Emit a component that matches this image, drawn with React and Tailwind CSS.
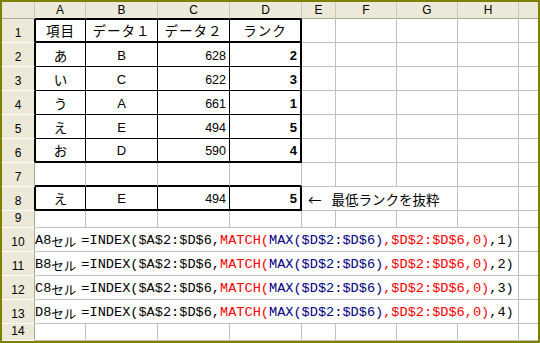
import React from "react";

const sans = "font-['Liberation_Sans','Noto_Sans_CJK_JP',sans-serif]";
const cjk = "font-['Noto_Sans_CJK_JP',sans-serif]";
const mono = "font-['Liberation_Mono','Noto_Sans_CJK_JP',monospace]";

const cols = ["A", "B", "C", "D", "E", "F", "G", "H", ""];

const data = [
  ["あ", "B", "628", "2"],
  ["い", "C", "622", "3"],
  ["う", "A", "661", "1"],
  ["え", "E", "494", "5"],
  ["お", "D", "590", "4"],
];

// normal empty cell with excel gridlines
function Empty({ last }) {
  return (
    <div
      className={
        last
          ? "border-b border-[#c0c0c0]"
          : "border-r border-b border-[#c0c0c0]"
      }
    />
  );
}

function RowHead({ n, thick }) {
  return (
    <div
      className={`flex items-end justify-center pb-[3px] bg-[#ece9d8] border-b border-b-white text-[12px] leading-none ${
        thick ? "border-r border-r-black" : "border-r border-r-[#aca899]"
      }`}
    >
      {n}
    </div>
  );
}

// border classes for the boxed table (A1:D6 and A8:D8)
function boxBorder(row, col) {
  let b = "";
  if (row === 1) b += " border-t border-t-black";
  if (row === 1 || row === 6 || row === 8) b += " border-b-2 border-b-black";
  else b += " border-b border-b-black";
  if (col === 0) b += " border-l border-l-black border-r border-r-black";
  else if (col === 3) b += " border-r-2 border-r-black";
  else b += " border-r border-r-black";
  return b;
}

function HeadRow() {
  return (
    <>
      {["項目", "データ１", "データ２", "ランク"].map((t, i) => (
        <div
          key={t}
          className={`flex items-end justify-center pb-[4px] text-[13.5px] tracking-[1px] leading-none ${cjk} ${boxBorder(1, i)}`}
        >
          {t}
        </div>
      ))}
    </>
  );
}

function TableRow({ row, cells }) {
  return (
    <>
      <div
        className={`flex items-end justify-center pb-[4px] text-[13.5px] leading-none ${cjk} ${boxBorder(row, 0)}`}
      >
        {cells[0]}
      </div>
      <div
        className={`flex items-end justify-center pb-[4px] text-[13px] leading-none ${boxBorder(row, 1)}`}
      >
        {cells[1]}
      </div>
      <div
        className={`flex items-end justify-end pr-[3px] pb-[4px] text-[12.5px] leading-none ${boxBorder(row, 2)}`}
      >
        {cells[2]}
      </div>
      <div
        className={`flex items-end justify-end pr-[3px] pb-[4px] text-[13px] font-bold leading-none ${boxBorder(row, 3)}`}
      >
        {cells[3]}
      </div>
    </>
  );
}

function Formula({ cell, n }) {
  return (
    <div
      className={`col-span-8 flex items-end pb-[3px] whitespace-nowrap border-r border-b border-[#c0c0c0] ${mono} text-[13.6px] leading-none`}
    >
      <span>{cell}8</span>
      <span className={`inline-block w-[30px] ${cjk} text-[12.5px]`}>セル</span>
      <span>=INDEX($A$2:$D$6,</span>
      <span className="text-[#ff0000]">MATCH(</span>
      <span className="text-[#000080]">MAX($D$2:$D$6)</span>
      <span className="text-[#ff0000]">,$D$2:$D$6,0)</span>
      <span>,{n})</span>
    </div>
  );
}

export default function App() {
  return (
    <div
      className={`w-[540px] h-[343px] bg-white border-2 border-[#808000] grid grid-cols-[33px_51px_72px_72px_72px_34px_61px_61px_61px_1fr] grid-rows-[17px_repeat(8,24px)_17px_repeat(4,24px)_17px] text-black ${sans}`}
    >
      {/* column header */}
      <div className="bg-[#ece9d8] border-r border-b border-r-[#cbc7b8] border-b-[#aca899]" />
      {cols.map((c, i) => (
        <div
          key={i}
          className={`flex items-end justify-center pb-[2px] bg-[#ece9d8] text-[12px] leading-none ${
            i < 4 ? "border-b border-b-black" : "border-b border-b-[#aca899]"
          } ${i < 8 ? "border-r border-r-[#cbc7b8]" : ""}`}
        >
          {c}
        </div>
      ))}

      {/* row 1 */}
      <RowHead n="1" thick />
      <HeadRow />
      <Empty />
      <Empty />
      <Empty />
      <Empty />
      <Empty last />

      {data.map((d, i) => (
        <React.Fragment key={i}>
          <RowHead n={i + 2} thick />
          <TableRow row={i + 2} cells={d} />
          <Empty />
          <Empty />
          <Empty />
          <Empty />
          <Empty last />
        </React.Fragment>
      ))}

      {/* row 7 */}
      <RowHead n="7" />
      <div className="border-r border-r-[#c0c0c0] border-b-2 border-b-black" />
      <div className="border-r border-r-[#c0c0c0] border-b-2 border-b-black" />
      <div className="border-r border-r-[#c0c0c0] border-b-2 border-b-black" />
      <div className="border-r border-r-[#c0c0c0] border-b-2 border-b-black" />
      <Empty />
      <Empty />
      <Empty />
      <Empty />
      <Empty last />

      {/* row 8 */}
      <RowHead n="8" thick />
      <TableRow row={8} cells={["え", "E", "494", "5"]} />
      <div
        className={`col-span-3 flex items-end pl-[6px] pb-[4px] whitespace-nowrap border-r border-b border-[#c0c0c0] text-[13.5px] leading-none ${cjk}`}
      >
        <span className="mr-[10px]">←</span>
        <span>最低ランクを抜粋</span>
      </div>
      <Empty />
      <Empty last />

      {/* row 9 */}
      <RowHead n="9" />
      <Empty />
      <Empty />
      <Empty />
      <Empty />
      <Empty />
      <Empty />
      <Empty />
      <Empty />
      <Empty last />

      {["A", "B", "C", "D"].map((c, i) => (
        <React.Fragment key={c}>
          <RowHead n={i + 10} />
          <Formula cell={c} n={i + 1} />
          <Empty last />
        </React.Fragment>
      ))}

      {/* row 14 */}
      <RowHead n="14" />
      <Empty />
      <Empty />
      <Empty />
      <Empty />
      <Empty />
      <Empty />
      <Empty />
      <Empty />
      <Empty last />
    </div>
  );
}
